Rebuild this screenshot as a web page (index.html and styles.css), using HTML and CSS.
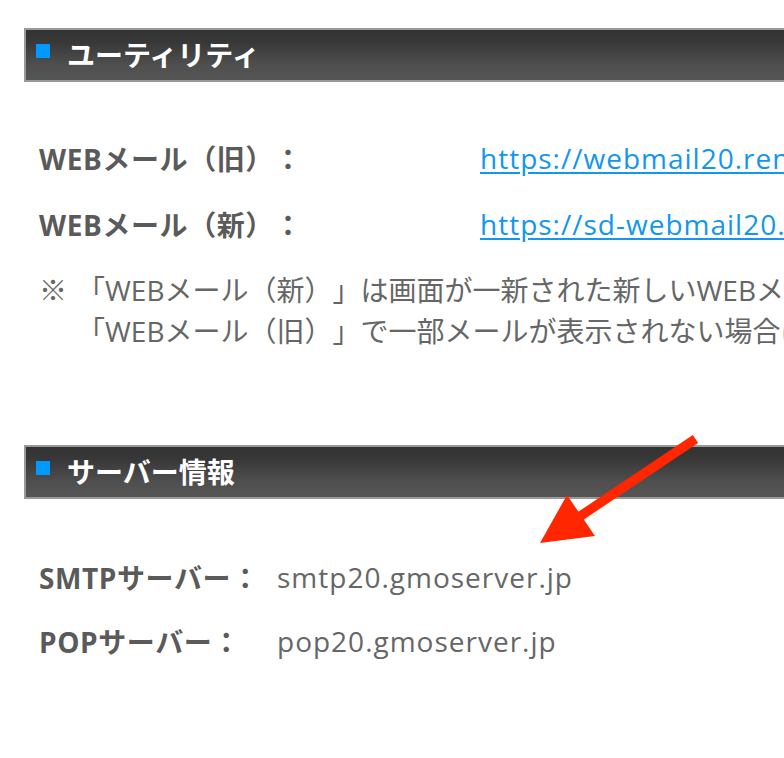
FILE: index.html
```html
<!DOCTYPE html>
<html lang="ja">
<head>
    <meta charset="UTF-8">
    <meta name="viewport" content="width=device-width, initial-scale=1.0">
    <title>ユーティリティ・サーバー情報</title>
    <link rel="stylesheet" href="styles.css">
</head>
<body>
    <div class="page">
        <h2 class="section-title"><span class="mark"></span>ユーティリティ</h2>
        <div class="rows rows-web">
            <div class="row">
                <span class="label">WEBメール（旧）：</span>
                <a class="value" href="#">https://webmail20.rentalserver.jp/</a>
            </div>
            <div class="row">
                <span class="label">WEBメール（新）：</span>
                <a class="value" href="#">https://sd-webmail20.rentalserver.jp/</a>
            </div>
        </div>
        <div class="note">
            <span class="note-mark">※</span>
            <p class="note-text">「WEBメール（新）」は画面が一新された新しいWEBメールです。<br>「WEBメール（旧）」で一部メールが表示されない場合はこちらをご利用ください。</p>
        </div>

        <h2 class="section-title section-server"><span class="mark"></span>サーバー情報</h2>
        <div class="rows rows-server">
            <div class="row">
                <span class="label">SMTPサーバー：</span>
                <span class="value">smtp20.gmoserver.jp</span>
            </div>
            <div class="row">
                <span class="label">POPサーバー：</span>
                <span class="value">pop20.gmoserver.jp</span>
            </div>
        </div>

        <svg class="arrow" width="784" height="758" viewBox="0 0 784 758">
            <line x1="695.5" y1="439" x2="576" y2="519" stroke="#ff2600" stroke-width="9.5"/>
            <polygon points="540,543 567,495 595,536" fill="#ff2600"/>
        </svg>
    </div>
</body>
</html>
```

FILE: styles.css
```css
html, body {
    margin: 0;
    padding: 0;
    background: #fff;
    overflow: hidden;
}

body {
    font-family: "Open Sans", "Noto Sans CJK JP", sans-serif;
    font-size: 28px;
    color: #666;
    text-spacing-trim: space-all;
}

.page {
    position: relative;
    width: 1100px;
    padding: 28px 0 0 24px;
}

.section-title {
    display: flex;
    align-items: center;
    height: 50px;
    margin: 0;
    border: 2px solid #999;
    background: linear-gradient(#333, #383838 25%, #4f4f4f 70%, #555);
    color: #fff;
    font-size: 28px;
    font-weight: bold;
    line-height: 50px;
}

.mark {
    flex: none;
    width: 14px;
    height: 14px;
    margin: 0 17px 0 10px;
    background: #0099ff;
    position: relative;
    top: -4px;
}

.rows {
    padding-left: 15px;
}

.rows-web {
    margin-top: 43px;
}

.row {
    display: flex;
    height: 66px;
    align-items: center;
    white-space: nowrap;
}

.label {
    flex: none;
    font-weight: bold;
    color: #5a5a5a;
    letter-spacing: 0.6px;
}

.rows-web .label {
    width: 441px;
}

.rows-server .label {
    width: 238px;
}

.value {
    color: #666;
    letter-spacing: 1px;
}

a.value {
    color: #1296f0;
    text-decoration: underline;
    text-underline-offset: 3px;
}

.note {
    display: flex;
    margin-top: 13px;
    padding-left: 15px;
    line-height: 41px;
    white-space: nowrap;
}

.note-mark {
    flex: none;
    width: 38px;
}

.note-text {
    margin: 0;
}

.section-server {
    margin-top: 93px;
}

.rows-server {
    margin-top: 46px;
}

.rows-server .row {
    height: 64px;
}

.arrow {
    position: absolute;
    left: 0;
    top: 0;
    pointer-events: none;
}
```
